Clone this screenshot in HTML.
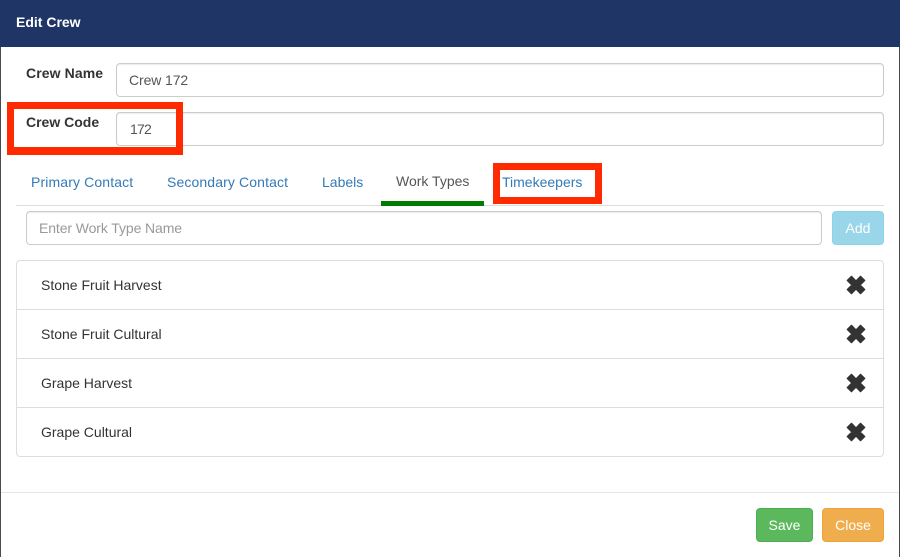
<!DOCTYPE html>
<html>
<head>
<meta charset="utf-8">
<style>
html,body{margin:0;padding:0;background:#fff;}
body{width:900px;height:557px;position:relative;overflow:hidden;font-family:"Liberation Sans",Arial,sans-serif;font-size:14px;color:#333;}
.a{position:absolute;box-sizing:border-box;white-space:nowrap;}
.t{line-height:20px;}
.input{background:#fff;border:1px solid #ccc;border-radius:4px;color:#555;line-height:32px;padding-left:12px;box-shadow:inset 0 1px 1px rgba(0,0,0,.075);}
.link{color:#337ab7;}
.btn{border-radius:4px;color:#fff;text-align:center;line-height:32px;border:1px solid;}
.red{border:7px solid #ff2a00;background:transparent;}
svg{position:absolute;}
</style>
</head>
<body>
<div class="a" style="left:0;top:0;width:1px;height:557px;background:#4a4a4a"></div>
<div class="a" style="left:899px;top:0;width:1px;height:557px;background:#4a4a4a"></div>
<div class="a" style="left:0;top:0;width:900px;height:47px;background:#1e3565"></div>
<div class="a t" style="left:16px;top:12px;color:#fff;font-weight:bold;font-size:14px;">Edit Crew</div>

<div class="a t" style="left:26px;top:63px;font-weight:bold;letter-spacing:.1px;">Crew Name</div>
<div class="a input" style="left:116px;top:63px;width:768px;height:34px;letter-spacing:-.1px;">Crew 172</div>
<div class="a t" style="left:26px;top:112px;font-weight:bold;">Crew Code</div>
<div class="a input" style="left:116px;top:112px;width:768px;height:34px;letter-spacing:-.8px;padding-left:13px;">172</div>
<div class="a red" style="left:7px;top:102px;width:176px;height:53px;border-bottom-width:8px;"></div>

<div class="a" style="left:16px;top:205px;width:868px;height:1px;background:#ddd"></div>
<div class="a t link" style="left:31px;top:172px;letter-spacing:.13px;">Primary Contact</div>
<div class="a t link" style="left:167px;top:172px;letter-spacing:.12px;">Secondary Contact</div>
<div class="a t link" style="left:322px;top:172px;">Labels</div>
<div class="a t" style="left:396px;top:171px;color:#555;">Work Types</div>
<div class="a" style="left:381px;top:201px;width:103px;height:5px;background:#007d00"></div>
<div class="a t link" style="left:502px;top:172px;">Timekeepers</div>
<div class="a red" style="left:493px;top:163px;width:109px;height:41px;"></div>

<div class="a input" style="left:26px;top:211px;width:796px;height:34px;color:#999;letter-spacing:-.1px;">Enter Work Type Name</div>
<div class="a btn" style="left:832px;top:211px;width:52px;height:34px;background:#99d6ea;border-color:#8fd3e8;">Add</div>

<div class="a" style="left:16px;top:260px;width:868px;height:197px;border:1px solid #ddd;border-radius:4px;"></div>
<div class="a" style="left:17px;top:309px;width:866px;height:1px;background:#ddd"></div>
<div class="a" style="left:17px;top:358px;width:866px;height:1px;background:#ddd"></div>
<div class="a" style="left:17px;top:407px;width:866px;height:1px;background:#ddd"></div>
<div class="a t" style="left:41px;top:275px;">Stone Fruit Harvest</div>
<div class="a t" style="left:41px;top:324px;">Stone Fruit Cultural</div>
<div class="a t" style="left:41px;top:373px;">Grape Harvest</div>
<div class="a t" style="left:41px;top:422px;">Grape Cultural</div>

<svg style="left:846px;top:275px" width="20" height="20" viewBox="0.5 0.5 19 19"><path d="M10 6.1L14.3 1.7L18.3 5.7L13.9 10L18.3 14.3L14.3 18.3L10 13.9L5.7 18.3L1.7 14.3L6.1 10L1.7 5.7L5.7 1.7Z" fill="#333" stroke="#333" stroke-width="1.2" stroke-linejoin="round"/></svg>
<svg style="left:846px;top:324px" width="20" height="20" viewBox="0.5 0.5 19 19"><path d="M10 6.1L14.3 1.7L18.3 5.7L13.9 10L18.3 14.3L14.3 18.3L10 13.9L5.7 18.3L1.7 14.3L6.1 10L1.7 5.7L5.7 1.7Z" fill="#333" stroke="#333" stroke-width="1.2" stroke-linejoin="round"/></svg>
<svg style="left:846px;top:373px" width="20" height="20" viewBox="0.5 0.5 19 19"><path d="M10 6.1L14.3 1.7L18.3 5.7L13.9 10L18.3 14.3L14.3 18.3L10 13.9L5.7 18.3L1.7 14.3L6.1 10L1.7 5.7L5.7 1.7Z" fill="#333" stroke="#333" stroke-width="1.2" stroke-linejoin="round"/></svg>
<svg style="left:846px;top:422px" width="20" height="20" viewBox="0.5 0.5 19 19"><path d="M10 6.1L14.3 1.7L18.3 5.7L13.9 10L18.3 14.3L14.3 18.3L10 13.9L5.7 18.3L1.7 14.3L6.1 10L1.7 5.7L5.7 1.7Z" fill="#333" stroke="#333" stroke-width="1.2" stroke-linejoin="round"/></svg>

<div class="a" style="left:1px;top:492px;width:898px;height:1px;background:#e5e5e5"></div>
<div class="a btn" style="left:756px;top:508px;width:57px;height:34px;background:#5cb85c;border-color:#4cae4c;">Save</div>
<div class="a btn" style="left:822px;top:508px;width:62px;height:34px;background:#f0ad4e;border-color:#eea236;">Close</div>
</body>
</html>
